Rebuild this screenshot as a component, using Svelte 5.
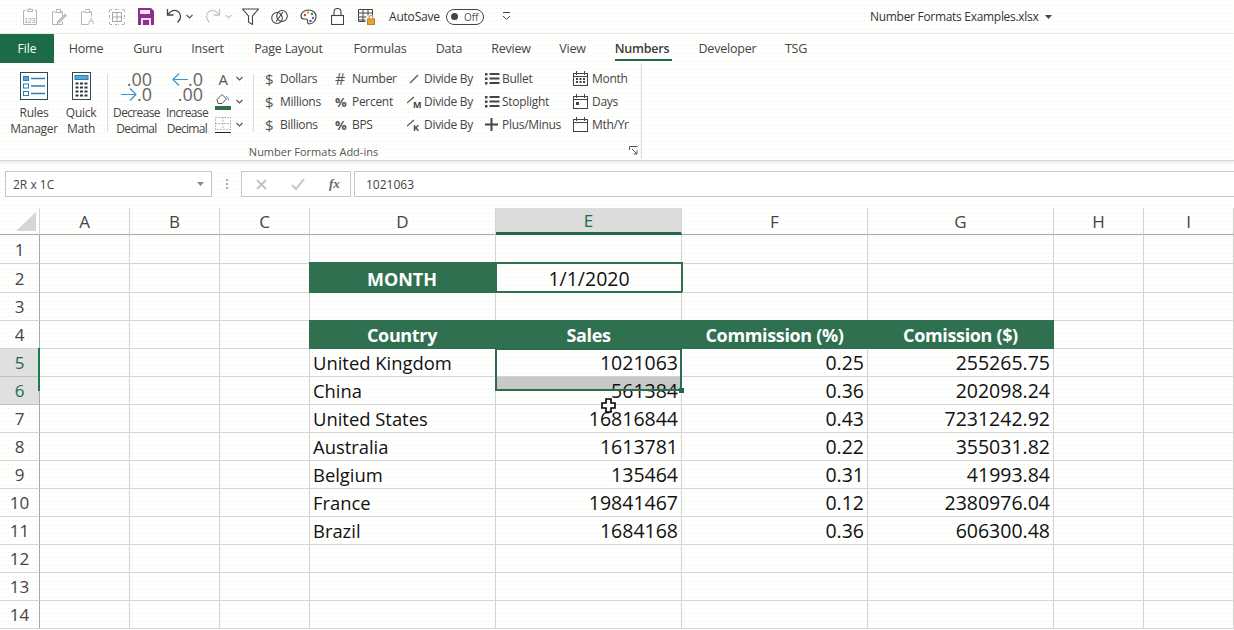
<script>
  const tabs = [
    { t: 'Home', w: 64 }, { t: 'Guru', w: 59 }, { t: 'Insert', w: 61 }, { t: 'Page Layout', w: 101 },
    { t: 'Formulas', w: 82 }, { t: 'Data', w: 56 }, { t: 'Review', w: 68 }, { t: 'View', w: 55 },
    { t: 'Numbers', w: 84, on: true }, { t: 'Developer', w: 87 }, { t: 'TSG', w: 50 }
  ];
  const cols = ['A', 'B', 'C', 'D', 'E', 'F', 'G', 'H', 'I'];
  const data = {
    2: { D: 'MONTH', E: '1/1/2020' },
    4: { D: 'Country', E: 'Sales', F: 'Commission (%)', G: 'Comission ($)' },
    5: { D: 'United Kingdom', E: '1021063', F: '0.25', G: '255265.75' },
    6: { D: 'China', E: '561384', F: '0.36', G: '202098.24' },
    7: { D: 'United States', E: '16816844', F: '0.43', G: '7231242.92' },
    8: { D: 'Australia', E: '1613781', F: '0.22', G: '355031.82' },
    9: { D: 'Belgium', E: '135464', F: '0.31', G: '41993.84' },
    10: { D: 'France', E: '19841467', F: '0.12', G: '2380976.04' },
    11: { D: 'Brazil', E: '1684168', F: '0.36', G: '606300.48' }
  };
  const rows = Array.from({ length: 14 }, (_, i) => i + 1);
  function cellClass(r, c) {
    const v = data[r] && data[r][c];
    let k = 'cell';
    if (r === 2 && c === 'D') k += ' head month-head';
    if (r === 2 && c === 'E') k += ' month';
    if (r === 4 && 'DEFG'.includes(c)) k += ' head';
    if (r === 4 && c === 'D') k += ' first-head';
    if (r > 4 && v && c !== 'D') k += ' num';
    if (r === 6 && c === 'E') k += ' drag';
    return k;
  }
</script>

<div class="page">
  <div class="titlebar">
    <span class="q">
      <svg width="16" height="19" viewBox="0 0 16 19" fill="none" stroke="#b4b4b4"><path d="M3.5 3.5h-2v14h13v-14h-2M5.5 4.5v-2h2v-1h1v1h2v2z"/><text x="2.5" y="15.5" font-size="6.5" font-family="Liberation Sans" fill="#a0a0a0" stroke="none">123</text></svg>
    </span>
    <span class="q">
      <svg width="16" height="18" viewBox="0 0 16 18" fill="none" stroke="#b4b4b4"><path d="M3.5 3.5h-2v13h10v-3M11.5 3.5h-2v-2h-4v2M3.5 4.5h8v3"/><path d="M7 13l7-7 1.5 1.5-7 7-2.5 1z" fill="#c8c8c8"/></svg>
    </span>
    <span class="q">
      <svg width="16" height="18" viewBox="0 0 16 18" fill="none" stroke="#b8b8b8"><path d="M3.5 3.5h-2v13h7M11.5 3.5h-2v-2h-4v2M3.5 4.5h8v4"/><text x="8" y="16" font-size="9" font-family="Liberation Sans" fill="#a8a8a8" stroke="none">A</text></svg>
    </span>
    <span class="q">
      <svg width="16" height="16" viewBox="0 0 16 16" fill="none" stroke="#a8a8a8"><path d="M.5 3V.5H3M13 .5h2.500V3M15.500 13v2.500H13M3 15.500H.5V13M6 .5h4M6 15.500h4M.5 6v4M15.500 6v4" stroke-dasharray="2 1"/><rect x="3.500" y="3.500" width="9" height="9"/><path d="M8 3.500v9M3.500 8h9"/></svg>
    </span>
    <span class="q">
      <svg width="16" height="17" viewBox="0 0 16 17"><path d="M0 0h13l3 3v14H0z" fill="#8e2f8f"/><path d="M2 2h10v4H2z" fill="#f4dff4"/><path d="M3 10h10v7H3z" fill="#f4dff4"/><path d="M5 12h6v5H5z" fill="#8e2f8f"/></svg>
    </span>
    <span class="q undo">
      <svg width="16" height="17" viewBox="0 0 16 17" fill="none" stroke="#444" stroke-width="1.300"><path d="M1.500 1v6h6"/><path d="M1.500 7C5 2.500 9 1.500 12 3.500c3.500 2.500 3.500 7-.5 11"/></svg>
      <svg class="chev" width="7" height="5" viewBox="0 0 7 5" fill="none" stroke="#555" stroke-width="1.200"><path d="M.5 1l3 3 3-3"/></svg>
    </span>
    <span class="q redo">
      <svg width="16" height="17" viewBox="0 0 16 17" fill="none" stroke="#c4c4c4" stroke-width="1.300"><path d="M14.500 1v6h-6"/><path d="M14.500 7C11 2.500 7 1.500 4 3.500c-3.500 2.500-3.500 7 .5 11"/></svg>
      <svg class="chev" width="7" height="5" viewBox="0 0 7 5" fill="none" stroke="#c8c8c8" stroke-width="1.200"><path d="M.5 1l3 3 3-3"/></svg>
    </span>
    <span class="q">
      <svg width="17" height="17" viewBox="0 0 17 17" fill="none" stroke="#444" stroke-width="1.100"><path d="M.5 1h16l-6 7v8.500l-4-2.500V8z"/></svg>
    </span>
    <span class="q">
      <svg width="17" height="16" viewBox="0 0 17 16" fill="none" stroke="#444" stroke-width="1.100"><ellipse cx="6" cy="9" rx="5.300" ry="5.500"/><ellipse cx="11" cy="7" rx="5.300" ry="5.500"/><path d="M5 12.500L12 3"/></svg>
    </span>
    <span class="q">
      <svg width="17" height="16" viewBox="0 0 17 16" fill="none" stroke="#444" stroke-width="1.100"><path d="M8.500 1C4 1 1 4 1 7c0 2 1 3 3 3 2.500 0 3-.5 3.500 1 .5 2-1 3 1.500 4 4 0 7-3.500 7-7.500S13 1 8.500 1z"/><circle cx="5" cy="6" r="1.200" fill="#c8483c" stroke="none"/><circle cx="8" cy="3.500" r="1.200" fill="#e0a030" stroke="none"/><circle cx="12" cy="5" r="1.200" fill="#3c8c50" stroke="none"/><circle cx="13" cy="9" r="1.200" fill="#3a7cc0" stroke="none"/><circle cx="10.500" cy="12" r="1.200" fill="#8e2f8f" stroke="none"/></svg>
    </span>
    <span class="q">
      <svg width="13" height="17" viewBox="0 0 13 17" fill="none" stroke="#444" stroke-width="1.100"><rect x=".5" y="7.500" width="12" height="9"/><path d="M3 7.500V4a3.500 3.500 0 017 0v3.500"/></svg>
    </span>
    <span class="q">
      <svg width="17" height="17" viewBox="0 0 17 17" fill="none" stroke="#444"><path d="M.5 1.500h14v6M.5 1.500v12h7M.5 5h14M.5 9h8M.5 12h7M5 1.500v12M10 1.500v6" /><rect x="9.500" y="11" width="7" height="5.500" fill="#e8a33a" stroke="#c47f1c"/><path d="M11 11V9.500a2 2 0 014 0V11" stroke="#c47f1c"/></svg>
    </span>
    <span class="autosave">AutoSave</span>
    <span class="toggle"><i></i>Off</span>
    <svg class="custom" width="9" height="9" viewBox="0 0 9 9" fill="none" stroke="#444"><path d="M1 .5h7"/><path d="M1 4l3.500 3.500L8 4"/></svg>
    <span class="doc">Number Formats Examples.xlsx</span>
    <svg class="docarrow" width="7" height="4" viewBox="0 0 7 4"><path d="M0 0h7L3.500 4z" fill="#444"/></svg>
  </div>

  <div class="tabs">
    <span class="file">File</span>
    {#each tabs as tab}
      <span class="tab" class:on={tab.on} style="width:{tab.w}px"><b>{tab.t}</b></span>
    {/each}
  </div>

  <div class="ribbon">
    <div class="group">
      <div class="big rules">
        <svg width="28" height="28" viewBox="0 0 28 28" fill="none"><rect x=".5" y=".5" width="27" height="27" stroke="#2e4a56"/><rect x="3.500" y="4.500" width="5" height="4" fill="#58a6d6" stroke="#2d7fb0"/><rect x="3.500" y="12" width="5" height="4" stroke="#2d7fb0"/><rect x="3.500" y="19.500" width="5" height="4" stroke="#2d7fb0"/><path d="M11 6.500h14M11 14h14M11 21.500h14" stroke="#2f7db4" stroke-width="1.600"/></svg>
        <span>Rules<br />Manager</span>
      </div>
      <div class="big math">
        <svg width="19" height="28" viewBox="0 0 19 28" fill="none"><rect x=".5" y=".5" width="18" height="27" stroke="#2e4a56"/><rect x="3" y="3.500" width="13" height="4" fill="#58a6d6" stroke="#2d7fb0"/><path d="M3.500 11.500h3M8 11.500h3M12.500 11.500h3M3.500 15.500h3M8 15.500h3M12.500 15.500h3M3.500 19.500h3M8 19.500h3M12.500 19.500h3M3.500 23.500h3M8 23.500h3M12.500 23.500h3" stroke="#2e3a40" stroke-width="2.200"/></svg>
        <span>Quick<br />Math</span>
      </div>
      <div class="vsep first"></div>
      <div class="big dec">
        <div class="glyph">
          <span class="g1">.00</span>
          <span class="g2"><svg width="16" height="13" viewBox="0 0 16 13" fill="none" stroke="#3b93c9" stroke-width="1.200"><path d="M0 6.500h15M9 .5l6 6-6 6"/></svg>.0</span>
        </div>
        <span class="tight">Decrease<br />Decimal</span>
      </div>
      <div class="big inc">
        <div class="glyph">
          <span class="g1"><svg width="16" height="13" viewBox="0 0 16 13" fill="none" stroke="#3b93c9" stroke-width="1.200"><path d="M16 6.500H1M7 .5l-6 6 6 6"/></svg>.0</span>
          <span class="g2">.00</span>
        </div>
        <span class="tight">Increase<br />Decimal</span>
      </div>
      <div class="fmt">
        <div class="fmtrow"><span class="fa">A</span><svg width="7" height="5" viewBox="0 0 7 5" fill="none" stroke="#555" stroke-width="1.100"><path d="M.5 1l3 3 3-3"/></svg></div>
        <div class="fmtrow">
          <svg width="16" height="17" viewBox="0 0 16 17" fill="none"><path d="M2 6.500l5-5 4.500 4.500-4.500 4.500H3z" stroke="#555"/><path d="M11 3c1.500 1 2.500 2.500 2.500 4.500" stroke="#3b93c9"/><rect y="13" width="16" height="4" fill="#2f6f4f"/></svg>
          <svg width="7" height="5" viewBox="0 0 7 5" fill="none" stroke="#555" stroke-width="1.100"><path d="M.5 1l3 3 3-3"/></svg>
        </div>
        <div class="fmtrow">
          <svg width="16" height="16" viewBox="0 0 16 16" fill="none" stroke="#777"><rect x=".5" y=".5" width="15" height="12" stroke-dasharray="1 2"/><path d="M8 .5v12M.5 6.500h15" stroke-dasharray="1 2"/><path d="M0 15.500h16" stroke="#222"/></svg>
          <svg width="7" height="5" viewBox="0 0 7 5" fill="none" stroke="#555" stroke-width="1.100"><path d="M.5 1l3 3 3-3"/></svg>
        </div>
      </div>
      <div class="vsep second"></div>
      <div class="stack s1">
        <div class="it"><span class="ic dollar">$</span>Dollars</div>
        <div class="it"><span class="ic dollar">$</span>Millions</div>
        <div class="it"><span class="ic dollar">$</span>Billions</div>
      </div>
      <div class="stack s2">
        <div class="it"><span class="ic hash">#</span>Number</div>
        <div class="it"><span class="ic pct">%</span>Percent</div>
        <div class="it"><span class="ic pct">%</span>BPS</div>
      </div>
      <div class="stack s3">
        <div class="it"><span class="ic"><svg width="14" height="14" viewBox="0 0 14 14" fill="none" stroke="#555" stroke-width="1.200"><path d="M3 11l8-8"/></svg></span>Divide By</div>
        <div class="it"><span class="ic"><svg width="14" height="14" viewBox="0 0 14 14" fill="none" stroke="#555" stroke-width="1.200"><path d="M0 8l7-6"/></svg><em>M</em></span>Divide By</div>
        <div class="it"><span class="ic"><svg width="14" height="14" viewBox="0 0 14 14" fill="none" stroke="#555" stroke-width="1.200"><path d="M0 8l7-6"/></svg><em>K</em></span>Divide By</div>
      </div>
      <div class="stack s4">
        <div class="it"><span class="ic"><svg width="15" height="13" viewBox="0 0 15 13" fill="#444"><rect y="1" width="2.500" height="2.500"/><rect y="5.500" width="2.500" height="2.500"/><rect y="10" width="2.500" height="2.500"/><rect x="4.500" y="1" width="10" height="2"/><rect x="4.500" y="5.500" width="10" height="2"/><rect x="4.500" y="10" width="10" height="2"/></svg></span>Bullet</div>
        <div class="it"><span class="ic"><svg width="15" height="13" viewBox="0 0 15 13" fill="#444"><rect y="1" width="2.500" height="2.500"/><rect y="5.500" width="2.500" height="2.500"/><rect y="10" width="2.500" height="2.500"/><rect x="4.500" y="1" width="10" height="2"/><rect x="4.500" y="5.500" width="10" height="2"/><rect x="4.500" y="10" width="10" height="2"/></svg></span>Stoplight</div>
        <div class="it"><span class="ic"><svg width="13" height="13" viewBox="0 0 13 13" fill="#444"><rect x="5.500" width="2" height="13"/><rect y="5.500" width="13" height="2"/></svg></span>Plus/Minus</div>
      </div>
      <div class="stack s5">
        <div class="it"><span class="ic"><svg width="15" height="15" viewBox="0 0 15 15" fill="none" stroke="#444"><rect x=".5" y="2.500" width="14" height="12"/><path d="M.5 5.500h14M3.500 0v4M11.500 0v4"/><path d="M3 8h2M6.500 8h2M10 8h2M3 11h2M6.500 11h2M10 11h2" stroke-width="2"/></svg></span>Month</div>
        <div class="it"><span class="ic"><svg width="15" height="15" viewBox="0 0 15 15" fill="none" stroke="#444"><rect x=".5" y="2.500" width="14" height="12"/><path d="M.5 5.500h14M3.500 0v4M11.500 0v4"/><rect x="3" y="8" width="3" height="3" fill="#444" stroke="none"/></svg></span>Days</div>
        <div class="it"><span class="ic"><svg width="15" height="15" viewBox="0 0 15 15" fill="none" stroke="#444"><rect x=".5" y="2.500" width="14" height="12"/><path d="M.5 5.500h14M3.500 0v4M11.500 0v4"/></svg></span>Mth/Yr</div>
      </div>
      <div class="grouplabel">Number Formats Add-ins
        <svg class="launcher" width="9" height="9" viewBox="0 0 9 9" fill="none" stroke="#555"><path d="M.5 4V.5H8.500M3 3l5 5M8 4.500V8H4.500"/></svg>
      </div>
    </div>
  </div>

  <div class="formula">
    <div class="namebox">2R x 1C<svg width="7" height="4" viewBox="0 0 7 4"><path d="M0 0h7L3.500 4z" fill="#888"/></svg></div>
    <div class="dots"><i></i><i></i><i></i></div>
    <div class="fxbox">
      <svg width="13" height="13" viewBox="0 0 13 13" fill="none" stroke="#c4c4c4" stroke-width="2"><path d="M2 2l9 9M11 2l-9 9"/></svg>
      <svg width="14" height="13" viewBox="0 0 14 13" fill="none" stroke="#c4c4c4" stroke-width="2"><path d="M1 7l4 4 8-10"/></svg>
      <span>fx</span>
    </div>
    <div class="input">1021063</div>
  </div>

  <div class="sheet">
    <div class="corner"><svg width="20" height="19" viewBox="0 0 20 19"><path d="M20 0v19H0z" fill="#d6d6d6"/></svg></div>
    {#each cols as c}
      <div class="colh" class:sel={c === 'E'}>{c}</div>
    {/each}
    {#each rows as r}
      <div class="rowh" class:sel={r === 5 || r === 6}>{r}</div>
      {#each cols as c}
        <div class={cellClass(r, c)}>{(data[r] && data[r][c]) || ''}</div>
      {/each}
    {/each}
    <div class="rowbar"></div>
    <div class="selection"><i></i></div>
    <svg class="cursor" width="15" height="15" viewBox="0 0 15 15"><path d="M5 1h5v4h4v5h-4v4H5v-4H1V5h4z" fill="#fff" stroke="#000" stroke-width="1.600"/></svg>
  </div>
</div>

<style>
  :global(body) { margin: 0; overflow: hidden; background: #fff; }
  .page {
    width: 1234px; height: 630px; overflow: hidden; position: relative;
    font-family: "Open Sans", "Noto Sans", sans-serif; color: #444;
    background-color: #fff;
    background-image: conic-gradient(at 1px 1px, transparent 75%, #eef6dc 0);
    background-size: 4px 4px;
  }
  .titlebar {
    height: 33px; border-bottom: 1px solid #e6e9e4; display: flex; align-items: center;
    padding-left: 15px; box-sizing: content-box;
  }
  .q { width: 29px; display: flex; justify-content: center; align-items: center; flex: none; }
  .undo { width: 43px; justify-content: flex-start; padding-left: 6px; box-sizing: border-box; }
  .redo { width: 33px; justify-content: flex-start; padding-left: 2px; box-sizing: border-box; }
  .chev { margin-left: 4px; }
  .autosave { margin-left: 8px; font-size: 12px; width: 57px; color: #333; letter-spacing: -.2px; }
  .toggle {
    width: 38px; height: 16px; box-sizing: border-box; border: 1px solid #444; border-radius: 8px;
    font-size: 10px; display: flex; align-items: center; padding-left: 4px; gap: 6px; color: #555;
  }
  .toggle i { width: 7px; height: 7px; border-radius: 50%; background: #444; }
  .custom { margin-left: 18px; }
  .doc { margin-left: 359px; font-size: 12px; color: #333; width: 170px; letter-spacing: -.3px; white-space: nowrap; }
  .docarrow { margin-left: 5px; }

  .tabs { height: 29px; display: flex; align-items: stretch; font-size: 12.500px; }
  .file {
    width: 54px; background: #1c6b47; color: #fff; display: flex; align-items: center; justify-content: center;
    font-weight: 500; font-size: 12px;
  }
  .tab { display: flex; align-items: center; justify-content: center; position: relative; flex: none; letter-spacing: -.2px; }
  .tab b { font-weight: 400; }
  .tab.on { color: #3a3a3a; }
  .tab.on b { font-weight: 600; }
  .tab.on::after {
    content: ''; position: absolute; left: 15px; right: 12px; bottom: 2px; height: 2px; background: #1c6b47;
  }

  .ribbon { height: 97px; border-bottom: 1px solid #d6d6d6; box-shadow: 0 2px 2px #ececec; font-size: 12px; letter-spacing: -.3px; }
  .group {
    width: 642px; height: 96px; box-sizing: border-box; border-right: 1px solid #d8d8d8; position: relative;
    display: flex; padding-top: 4px; padding-bottom: 4px; flex-wrap: nowrap;
  }
  .big {
    display: flex; flex-direction: column; align-items: center; text-align: center; line-height: 16px; flex: none;
  }
  .big > svg { margin-top: 5px; margin-bottom: 5px; }
  .tight { letter-spacing: -.65px; }
  .rules { width: 48px; margin-left: 10px; }
  .math { width: 38px; margin-left: 4px; }
  .vsep { width: 1px; background: #dcdcdc; height: 58px; margin-top: 7px; flex: none; }
  .first { margin-left: 7px; }
  .second { margin-left: 4px; }
  .dec { width: 47px; margin-left: 5px; }
  .inc { width: 44px; margin-left: 5px; }
  .glyph {
    height: 38px; display: flex; flex-direction: column; align-items: flex-end; width: 100%;
    font-size: 18px; line-height: 15px; padding-top: 5px; box-sizing: border-box; color: #666; letter-spacing: 0;
  }
  .glyph span { display: flex; align-items: center; padding-right: 8px; height: 15px; }
  .inc .glyph span { padding-right: 6px; }
  .fmt { width: 35px; margin-left: 5px; flex: none; display: flex; flex-direction: column; }
  .fmtrow { height: 23px; display: flex; align-items: center; gap: 5px; padding-left: 1px; }
  .fa { width: 16px; text-align: center; font-size: 15px; color: #555; }
  .stack { flex: none; display: flex; flex-direction: column; color: #444; }
  .it { height: 23px; display: flex; align-items: center; white-space: nowrap; }
  .ic { display: flex; align-items: center; justify-content: flex-start; flex: none; position: relative; }
  .s1 { margin-left: 11px; width: 70px; }
  .s1 .ic { width: 15px; }
  .s2 { width: 72px; }
  .s2 .ic { width: 17px; }
  .s3 { width: 78px; }
  .s3 .ic { width: 17px; }
  .s4 { width: 88px; }
  .s4 .ic { width: 17px; }
  .s5 { width: 60px; }
  .s5 .ic { width: 19px; }
  .dollar { font-size: 15px; color: #555; }
  .hash { font-size: 16px; color: #555; }
  .pct { font-size: 13px; font-weight: 700; color: #555; }
  .ic em { position: absolute; left: 6px; top: 5px; font-style: normal; font-size: 9px; font-weight: 700; color: #444; line-height: 10px; }
  .grouplabel {
    position: absolute; left: 0; right: 14px; bottom: -2px; height: 17px; line-height: 15px; text-align: center;
    font-size: 11px; letter-spacing: 0; color: #555;
  }
  .launcher { position: absolute; right: -11px; top: 2px; }

  .formula { height: 26px; margin-top: 10px; display: flex; padding-left: 5px; font-size: 12px; color: #444; }
  .namebox {
    width: 207px; height: 26px; box-sizing: border-box; border: 1px solid #c8c8c8; display: flex; align-items: center;
    justify-content: space-between; padding: 0 7px 0 7px; background: #fff;
  }
  .dots { width: 29px; display: flex; flex-direction: column; align-items: center; justify-content: center; gap: 2px; }
  .dots i { width: 2px; height: 2px; background: #aaa; }
  .fxbox {
    width: 110px; box-sizing: border-box; border: 1px solid #c8c8c8; display: flex; align-items: center;
    background: #fff; padding-left: 13px; gap: 23px;
  }
  .fxbox span { font-family: "Liberation Serif", serif; font-style: italic; font-size: 13px; font-weight: 700; color: #666; margin-left: 1px; }
  .input {
    flex: 1; margin-left: 3px; border: 1px solid #c8c8c8; border-right: 0; background: #fff; display: flex; align-items: center; padding-left: 11px;
  }

  .sheet {
    margin-top: 11px; display: grid; position: relative;
    grid-template-columns: 40px 90px 90px 90px 186px 186px 186px 186px 90px 90px;
    grid-template-rows: 27px 29px 29px repeat(12, 28px);
    color: #111;
  }
  .corner { border-right: 1px solid #d4d4d4; border-bottom: 1px solid #a4a8a4; display: flex; justify-content: flex-end; padding: 4px 3px 3px 0; box-sizing: border-box; }
  .colh {
    display: flex; align-items: center; justify-content: center; border-right: 1px solid #d4d4d4; border-bottom: 1px solid #a4a8a4;
    font-size: 17px; color: #444; box-sizing: border-box;
  }
  .colh.sel { background: #dcdcdc; color: #1f6b47; border-bottom: 3px solid #1f6b47; }
  .rowh {
    display: flex; align-items: center; justify-content: center; border-right: 1px solid #a8a8a8; border-bottom: 1px solid #d4d4d4;
    font-size: 17px; color: #444; box-sizing: border-box;
  }
  .rowh.sel { background: #e0e0e0; color: #1f6b47; border-bottom-color: #c0c0c0; }
  .rowbar { position: absolute; left: 38px; top: 140px; width: 2px; height: 43px; background: #1f7a4d; }
  .cell {
    border-right: 1px solid #d4d4d4; border-bottom: 1px solid #d4d4d4; box-sizing: border-box; font-size: 18.400px;
    display: flex; align-items: center; padding: 0 3px; white-space: nowrap; color: #111; min-width: 0;
  }
  .cell.num { justify-content: flex-end; font-size: 19.500px; }
  .cell.head {
    background: #2f7050; color: #fff; font-weight: 700; justify-content: center; border-color: #2f7050; font-size: 18px;
    margin-top: -1px; padding-top: 2px; letter-spacing: -.35px;
  }
  .cell.first-head { margin-left: -1px; }
  .cell.month-head { margin: -2px 0 0 -1px; padding-top: 3px; letter-spacing: 0; }
  .cell.month { justify-content: center; border: 2px solid #2f7050; margin: -2px -1px 0 -1px; font-size: 19.500px; padding-top: 2px; }
  .cell.drag { background: linear-gradient(#c8c8c8 12px, transparent 12px); }
  .selection {
    position: absolute; left: 495px; top: 140px; width: 187px; height: 43px; border: 2px solid #2a6e4e;
    box-sizing: border-box; pointer-events: none;
  }
  .selection i {
    position: absolute; right: -4px; bottom: -4px; width: 5px; height: 5px; background: #1f6b47;
  }
  .cursor { position: absolute; left: 601px; top: 190px; }
</style>
